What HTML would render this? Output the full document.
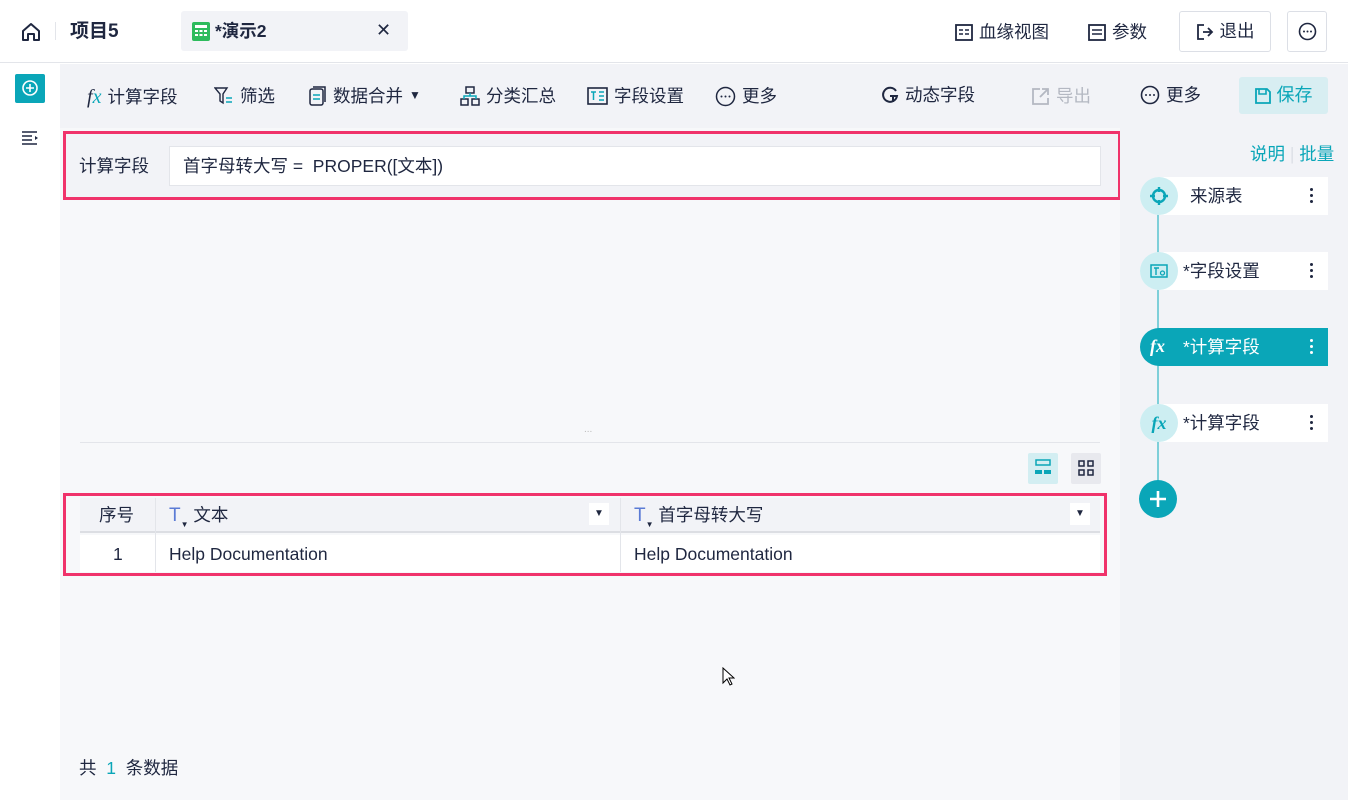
<!DOCTYPE html>
<html><head><meta charset="utf-8"><style>
*{box-sizing:border-box;margin:0;padding:0}
body{width:1348px;height:800px;overflow:hidden;font-family:"Liberation Sans","Noto Sans CJK SC",sans-serif;color:#1f2740;font-size:17.5px;line-height:1.15;background:#fff;position:relative}
.abs{position:absolute}
.top{left:0;top:0;width:1348px;height:63px;background:#fff;border-bottom:1px solid #e3e5ea}
.side{left:0;top:64px;width:60px;height:736px;background:#fff}
.tb{left:60px;top:64px;width:1288px;height:64px;background:#f2f3f7}
.main{left:60px;top:128px;width:1060px;height:672px;background:#f7f8fa}
.rp{left:1120px;top:128px;width:228px;height:672px;background:#f2f3f7}
.ti{display:flex;align-items:center;gap:6px;color:#1f2740}
.btn{border:1px solid #dcdfe6;border-radius:3px;background:#fff}
.node{left:1140px;width:188px;height:38px;background:#fff;border-radius:19px 0 0 19px}
.circ{width:38px;height:38px;border-radius:50%;background:#cdeef2;display:flex;align-items:center;justify-content:center;color:#0aa6b8}
.dots{right:14px;top:9px;width:4px}
.dots i{display:block;width:3px;height:3px;background:#1f2740;border-radius:50%;margin:2px 0 3px}
</style></head><body>
<div class="abs top"></div>
<svg class="abs" style="left:20px;top:21px" width="22" height="22" viewBox="0 0 22 22"><path d="M3 10 L11 3 L19 10 V19 H14 V13 H8 V19 H3 Z" fill="none" stroke="#1f2740" stroke-width="2" stroke-linejoin="round"/></svg>
<div class="abs" style="left:55px;top:22px;width:1px;height:18px;background:#e3e5ea"></div>
<div class="abs" style="left:70px;top:21px;font-size:19px;font-weight:bold">项目5</div>
<div class="abs" style="left:181px;top:11px;width:227px;height:40px;background:#f2f3f7;border-radius:3px"></div>
<svg class="abs" style="left:192px;top:22px" width="18" height="19"><rect width="18" height="19" rx="2" fill="#2dbb5d"/><g fill="#fff"><rect x="3" y="3" width="12" height="3"/><rect x="3" y="8" width="3" height="2"/><rect x="7.5" y="8" width="3" height="2"/><rect x="12" y="8" width="3" height="2"/><rect x="3" y="12" width="3" height="2"/><rect x="7.5" y="12" width="3" height="2"/><rect x="12" y="12" width="3" height="2"/></g></svg>
<div class="abs" style="left:215px;top:21px;font-size:17.5px;font-weight:bold">*演示2</div>
<div class="abs" style="left:376px;top:20px;font-size:18px">✕</div>
<div class="abs ti" style="left:955px;top:22px"><svg width="18" height="17"><rect x="1" y="1" width="16" height="15" fill="none" stroke="#1f2740" stroke-width="1.8"/><path d="M4 6h4M4 10h4M10 6h4M10 10h4" stroke="#1f2740" stroke-width="1.6"/></svg>血缘视图</div>
<div class="abs ti" style="left:1088px;top:22px"><svg width="18" height="17"><rect x="1" y="1" width="16" height="15" fill="none" stroke="#1f2740" stroke-width="1.8"/><path d="M4 6h10M4 10h10" stroke="#1f2740" stroke-width="1.6"/></svg>参数</div>
<div class="abs btn ti" style="left:1179px;top:11px;width:92px;height:41px;justify-content:center"><svg width="18" height="18"><path d="M8 2H2v14h6M7 9h9M12 5l4 4-4 4" fill="none" stroke="#1f2740" stroke-width="1.8"/></svg>退出</div>
<div class="abs btn" style="left:1287px;top:11px;width:40px;height:41px"><svg style="margin:10px" width="19" height="19"><circle cx="9.5" cy="9.5" r="8" fill="none" stroke="#1f2740" stroke-width="1.6"/><circle cx="6" cy="9.5" r="1" fill="#1f2740"/><circle cx="9.5" cy="9.5" r="1" fill="#1f2740"/><circle cx="13" cy="9.5" r="1" fill="#1f2740"/></svg></div>

<div class="abs side"></div>
<div class="abs" style="left:15px;top:74px;width:30px;height:29px;background:#0aa6b8;border-radius:2px"><svg style="margin:6px 7px" width="16" height="16"><circle cx="8" cy="8" r="7" fill="none" stroke="#fff" stroke-width="1.6"/><path d="M8 4v8M4 8h8" stroke="#fff" stroke-width="1.6"/></svg></div>
<svg class="abs" style="left:22px;top:131px" width="17" height="15"><path d="M0 1h15M0 5h10M0 9h10M0 13h15" stroke="#1f2740" stroke-width="1.6"/><path d="M13 5l3 2-3 2z" fill="#1f2740"/></svg>

<div class="abs tb"></div>
<div class="abs ti" style="left:87px;top:86px"><i style="font-family:'Liberation Serif',serif;font-size:20px">f<span style="color:#0aa6b8">x</span></i>计算字段</div>
<div class="abs ti" style="left:214px;top:86px"><svg width="20" height="18"><path d="M1 1h12l-4 6v9l-3-2V7z" fill="none" stroke="#1f2740" stroke-width="1.4"/><path d="M12 11h6M12 15h6" stroke="#0aa6b8" stroke-width="1.6"/></svg>筛选</div>
<div class="abs ti" style="left:309px;top:86px"><svg width="18" height="20"><rect x="1" y="3" width="13" height="16" rx="2" fill="none" stroke="#1f2740" stroke-width="1.5"/><path d="M4 1h12v15" fill="none" stroke="#1f2740" stroke-width="1.5"/><path d="M4 9h7M4 13h7" stroke="#0aa6b8" stroke-width="1.5"/></svg>数据合并 <span style="font-size:12px">▼</span></div>
<div class="abs ti" style="left:460px;top:86px"><svg width="20" height="20"><rect x="6" y="1" width="8" height="6" fill="none" stroke="#1f2740" stroke-width="1.5"/><rect x="1" y="13" width="7" height="6" fill="none" stroke="#1f2740" stroke-width="1.5"/><rect x="12" y="13" width="7" height="6" fill="none" stroke="#1f2740" stroke-width="1.5"/><path d="M10 7v3M4 13v-3h12v3" fill="none" stroke="#0aa6b8" stroke-width="1.5"/></svg>分类汇总</div>
<div class="abs ti" style="left:587px;top:86px"><svg width="21" height="18"><rect x="1" y="1" width="19" height="16" fill="none" stroke="#1f2740" stroke-width="1.6"/><path d="M4 5h5M6.5 5v8M12 5h5M12 9h5M12 13h5" stroke="#0aa6b8" stroke-width="1.5"/></svg>字段设置</div>
<div class="abs ti" style="left:715px;top:86px"><svg width="21" height="21"><circle cx="10.5" cy="10.5" r="9" fill="none" stroke="#1f2740" stroke-width="1.5"/><circle cx="6.5" cy="10.5" r="1" fill="#1f2740"/><circle cx="10.5" cy="10.5" r="1" fill="#1f2740"/><circle cx="14.5" cy="10.5" r="1" fill="#1f2740"/></svg>更多</div>
<div class="abs ti" style="left:881px;top:85px"><svg width="18" height="18"><path d="M15 5A7 7 0 1 0 16 10H9" fill="none" stroke="#1f2740" stroke-width="2"/><path d="M12 10v6" stroke="#1f2740" stroke-width="2"/></svg>动态字段</div>
<div class="abs ti" style="left:1032px;top:86px;color:#b4b8c2"><svg width="18" height="18"><path d="M8 2H1v15h15v-6M10 2h6v6M16 2l-8 8" fill="none" stroke="#b4b8c2" stroke-width="1.8"/></svg>导出</div>
<div class="abs ti" style="left:1140px;top:85px"><svg width="20" height="20"><circle cx="10" cy="10" r="8.5" fill="none" stroke="#1f2740" stroke-width="1.6"/><circle cx="6" cy="10" r="1" fill="#1f2740"/><circle cx="10" cy="10" r="1" fill="#1f2740"/><circle cx="14" cy="10" r="1" fill="#1f2740"/></svg>更多</div>
<div class="abs ti" style="left:1239px;top:77px;width:89px;height:37px;background:#d8eef2;border-radius:3px;justify-content:center;color:#0aa6b8;font-size:18px"><svg width="16" height="16"><path d="M1 1h11l3 3v11H1z" fill="none" stroke="#0aa6b8" stroke-width="1.8"/><path d="M4 1v5h7V1" fill="none" stroke="#0aa6b8" stroke-width="1.6"/></svg>保存</div>

<div class="abs main"></div>
<div class="abs" style="left:63px;top:131px;width:1058px;height:69px;border:3px solid #f0336b;background:#f2f3f7"></div>
<div class="abs" style="left:79px;top:156px">计算字段</div>
<div class="abs" style="left:169px;top:146px;width:932px;height:40px;background:#fff;border:1px solid #e3e5ea;padding:9px 13px">首字母转大写 =&nbsp; PROPER([文本])</div>
<div class="abs" style="left:584px;top:424px;font-size:10px;color:#bbb">...</div>
<div class="abs" style="left:80px;top:442px;width:1020px;height:1px;background:#e3e5ea"></div>
<div class="abs" style="left:1028px;top:453px;width:30px;height:31px;background:#d3eef2;border-radius:2px"><svg style="margin:6px 7px" width="16" height="18"><rect x="1" y="1" width="14" height="5" fill="none" stroke="#0aa6b8" stroke-width="1.5"/><rect x="0" y="11" width="7" height="4" fill="#0aa6b8"/><rect x="9" y="11" width="7" height="4" fill="#0aa6b8"/></svg></div>
<div class="abs" style="left:1071px;top:453px;width:30px;height:31px;background:#e8e9ee;border-radius:2px"><svg style="margin:7px 7px" width="16" height="16"><g fill="none" stroke="#1f2740" stroke-width="1.5"><rect x="1" y="1" width="5" height="5"/><rect x="10" y="1" width="5" height="5"/><rect x="1" y="10" width="5" height="5"/><rect x="10" y="10" width="5" height="5"/></g></svg></div>

<div class="abs" style="left:63px;top:493px;width:1044px;height:83px;border:3px solid #f0336b;background:#f7f8fa"></div>
<div class="abs" style="left:80px;top:498px;width:1020px;height:35px;background:#f2f3f7;border-bottom:2px solid #dcdee3"></div>
<div class="abs" style="left:80px;top:535px;width:1020px;height:37px;background:#fff"></div>
<div class="abs" style="left:155px;top:498px;width:1px;height:74px;background:#e3e5ea"></div>
<div class="abs" style="left:620px;top:498px;width:1px;height:74px;background:#e3e5ea"></div>
<div class="abs" style="left:99px;top:505px">序号</div>
<div class="abs" style="left:169px;top:505px"><span style="color:#5b7bd5;font-size:19px">T</span><span style="font-size:8px;position:relative;top:6px">▼</span> 文本</div>
<div class="abs" style="left:634px;top:505px"><span style="color:#5b7bd5;font-size:19px">T</span><span style="font-size:8px;position:relative;top:6px">▼</span> 首字母转大写</div>
<div class="abs" style="left:589px;top:503px;width:20px;height:22px;background:#fff;font-size:10px;text-align:center;line-height:22px">▼</div>
<div class="abs" style="left:1070px;top:503px;width:20px;height:22px;background:#fff;font-size:10px;text-align:center;line-height:22px">▼</div>
<div class="abs" style="left:113px;top:544px">1</div>
<div class="abs" style="left:169px;top:544px">Help Documentation</div>
<div class="abs" style="left:634px;top:544px">Help Documentation</div>
<div class="abs" style="left:79px;top:758px">共 &nbsp;<span style="color:#0aa6b8">1</span>&nbsp; 条数据</div>
<svg class="abs" style="left:722px;top:667px" width="13" height="19"><path d="M1 1v15l4-4 3 6 2-1-3-6h5z" fill="#fff" stroke="#000"/></svg>

<div class="abs rp"></div>
<div class="abs" style="left:1250px;top:144px;color:#0aa6b8">说明 <span style="color:#dcdfe6">|</span> 批量</div>
<div class="abs" style="left:1157px;top:200px;width:2px;height:300px;background:#7fcfd9"></div>
<div class="abs node" style="top:177px"><div class="abs circ" style="left:0;top:0"><svg width="20" height="20"><circle cx="10" cy="10" r="6" fill="none" stroke="#0aa6b8" stroke-width="2.4"/><path d="M10 1v5M10 14v5M1 10h5M14 10h5" stroke="#0aa6b8" stroke-width="2.4"/></svg></div><div class="abs" style="left:50px;top:9px">来源表</div><div class="abs dots"><i></i><i></i><i></i></div></div>
<div class="abs node" style="top:252px"><div class="abs circ" style="left:0;top:0"><svg width="18" height="14"><rect x="1" y="1" width="16" height="12" fill="none" stroke="#0aa6b8" stroke-width="1.5"/><path d="M4 4h5M6 4v7" stroke="#0aa6b8" stroke-width="1.4"/><circle cx="12.5" cy="9" r="2" fill="none" stroke="#0aa6b8" stroke-width="1.3"/></svg></div><div class="abs" style="left:43px;top:9px">*字段设置</div><div class="abs dots"><i></i><i></i><i></i></div></div>
<div class="abs node" style="top:328px;background:#0aa6b8;color:#fff"><div class="abs" style="left:10px;top:8px;font-style:italic;font-weight:bold;font-family:'Liberation Serif',serif;font-size:18px">fx</div><div class="abs" style="left:43px;top:9px">*计算字段</div><div class="abs dots"><i style="background:#fff"></i><i style="background:#fff"></i><i style="background:#fff"></i></div></div>
<div class="abs node" style="top:404px"><div class="abs circ" style="left:0;top:0;font-style:italic;font-weight:bold;font-family:'Liberation Serif',serif;font-size:18px">fx</div><div class="abs" style="left:43px;top:9px">*计算字段</div><div class="abs dots"><i></i><i></i><i></i></div></div>
<div class="abs" style="left:1139px;top:480px;width:38px;height:38px;border-radius:50%;background:#0aa6b8"><svg style="margin:10px" width="18" height="18"><path d="M9 1v16M1 9h16" stroke="#fff" stroke-width="2.6"/></svg></div>
</body></html>
